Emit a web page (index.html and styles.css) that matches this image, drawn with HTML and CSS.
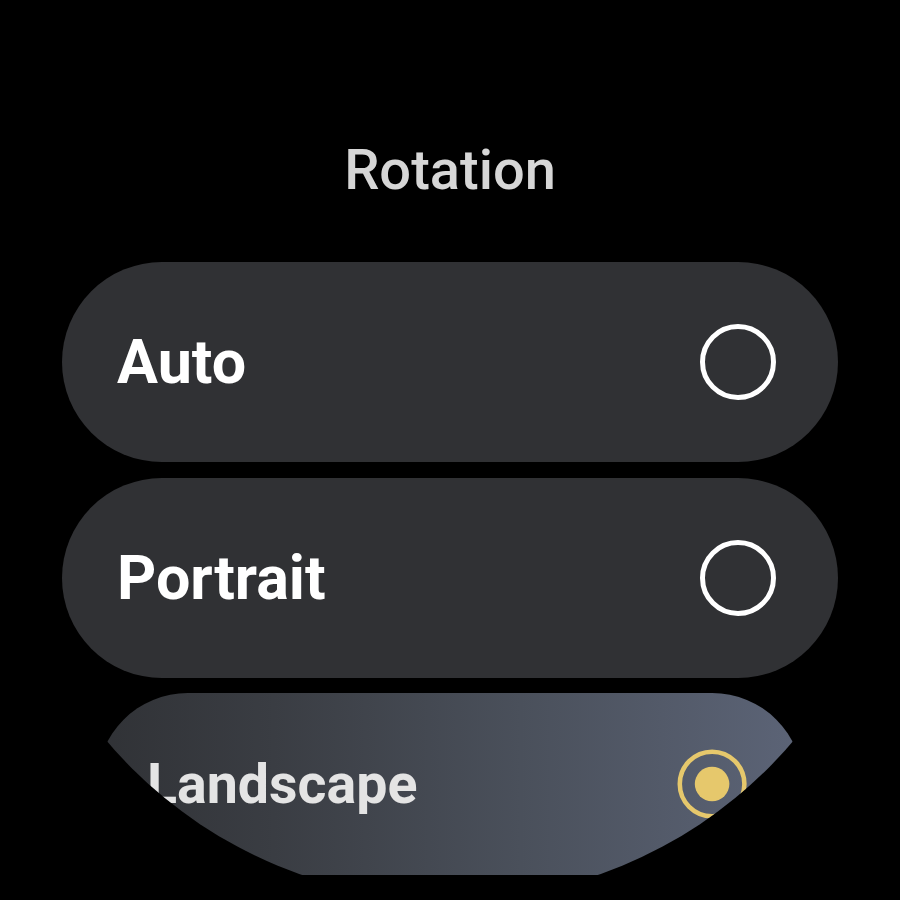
FILE: index.html
```html
<!DOCTYPE html>
<html lang="en">

<head>
  <meta charset="utf-8">
  <title>Rotation</title>
  <meta name="viewport" content="width=device-width, initial-scale=1.0">
  <link rel="stylesheet" href="styles.css">
</head>

<body>
  <div class="screen">
    <h2 class="title">Rotation</h2>

    <div class="chip-list">
      <div class="chip">
        <span class="chip-label">Auto</span>
        <span class="radio"></span>
      </div>

      <div class="chip">
        <span class="chip-label">Portrait</span>
        <span class="radio"></span>
      </div>

      <div class="chip chip-selected chip-edge">
        <span class="chip-label">Landscape</span>
        <span class="radio radio-on"></span>
      </div>
    </div>
  </div>
</body>

</html>
```

FILE: styles.css
```css
body {
  margin: 0;
  background-color: #000000;
  font-family: Roboto, "Noto Sans", sans-serif;
}

.screen {
  width: 900px;
  height: 900px;
  border-radius: 50%;
  overflow: hidden;
  background-color: #000000;
  display: flex;
  flex-direction: column;
  align-items: center;
  padding-top: 142px;
  box-sizing: border-box;
}

.title {
  margin: 0 0 64px 0;
  font-size: 56px;
  line-height: 56px;
  font-weight: 500;
  color: #d6d6d6;
}

.chip-list {
  width: 100%;
  padding: 0 62px;
  box-sizing: border-box;
  display: flex;
  flex-direction: column;
  gap: 16px;
}

.chip {
  height: 200px;
  border-radius: 100px;
  background-color: #303134;
  display: flex;
  align-items: center;
  justify-content: space-between;
  padding: 0 62px 0 55px;
  flex-shrink: 0;
}

.chip-label {
  font-size: 61px;
  font-weight: 700;
  color: #ffffff;
}

.radio {
  width: 66px;
  height: 66px;
  border: 5px solid #ffffff;
  border-radius: 50%;
  position: relative;
}

.chip-selected {
  background: linear-gradient(to right, #303236, #3a3d43 25%, #4a505b 60%, #5c6477);
}

.chip-selected .chip-label {
  color: #e4e4e4;
}

.chip-edge {
  transform: translateY(-10px) scale(0.91);
}

.radio-on {
  border-color: #e6c86c;
}

.radio-on::after {
  content: "";
  position: absolute;
  left: 50%;
  top: 50%;
  width: 38px;
  height: 38px;
  margin: -19px 0 0 -19px;
  border-radius: 50%;
  background-color: #e6c86c;
}
```
